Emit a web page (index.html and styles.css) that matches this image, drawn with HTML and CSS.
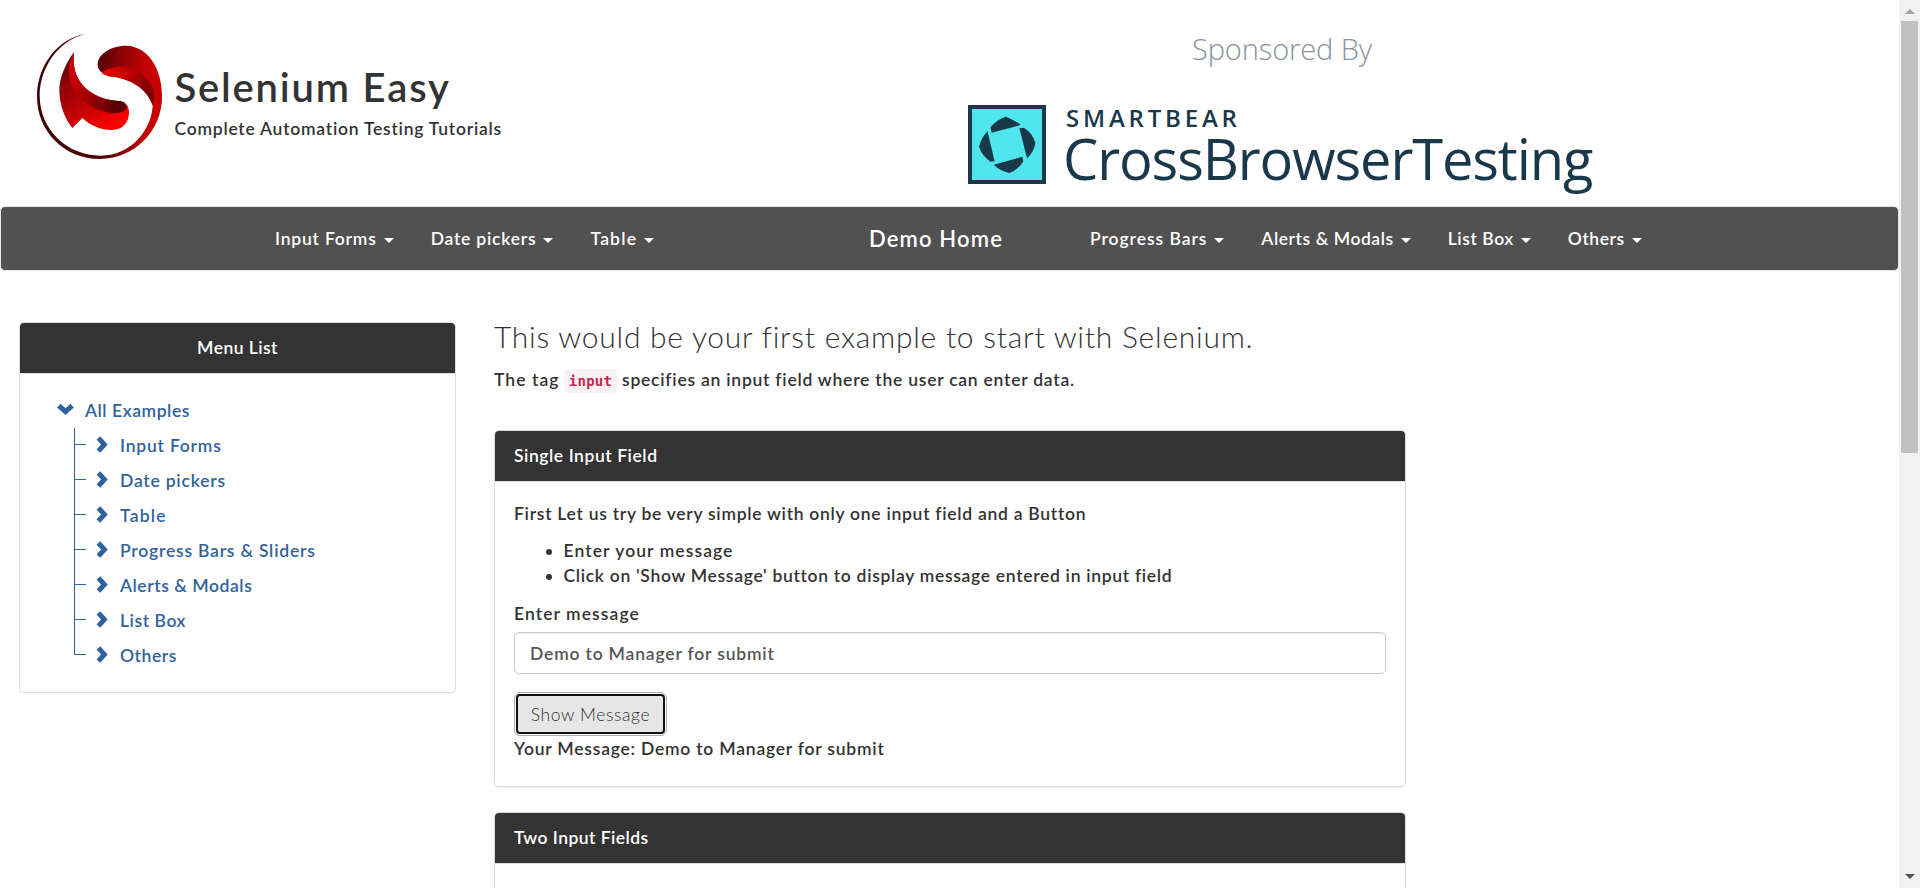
FILE: index.html
```
<!DOCTYPE html>
<html lang="en">
<head>
<meta charset="utf-8">
<title>Selenium Easy Demo</title>
<link rel="stylesheet" href="styles.css">
</head>
<body>
<div class="page">
  <header class="header">
    <svg class="logo" width="140" height="140" viewBox="0 0 420 420">
      <defs>
        <linearGradient id="ring" x1="0" y1="0" x2="1" y2="0"><stop offset="0" stop-color="#3c0408"/><stop offset=".55" stop-color="#550307"/><stop offset=".85" stop-color="#b80006"/><stop offset="1" stop-color="#cf0000"/></linearGradient>
        <linearGradient id="cap" x1="0" y1=".1" x2="1" y2=".4"><stop offset="0" stop-color="#4e0205"/><stop offset=".35" stop-color="#8e0306"/><stop offset=".75" stop-color="#c80204"/><stop offset="1" stop-color="#c60000"/></linearGradient>
        <linearGradient id="fold" x1="0" y1="0" x2="1" y2=".3"><stop offset="0" stop-color="#ee0000"/><stop offset=".45" stop-color="#c90000"/><stop offset="1" stop-color="#7c0003"/></linearGradient>
        <linearGradient id="tail" x1=".1" y1="0" x2=".7" y2="1"><stop offset="0" stop-color="#5a0306"/><stop offset=".55" stop-color="#b50307"/><stop offset="1" stop-color="#fb0000"/></linearGradient>
        <linearGradient id="sweep" x1="0" y1="0" x2="1" y2=".4"><stop offset="0" stop-color="#e00005"/><stop offset=".4" stop-color="#b00004"/><stop offset="1" stop-color="#5a0003"/></linearGradient>
      </defs>
      <path fill="url(#ring)" d="M165 27C85 40 21 120 21 215C21 320 105 402 209 402C312 402 396 320 396 214L369 232C368 312 306 392 212 392C112 392 30 315 29 213C29 125 88 46 165 27Z"/>
      <path fill="url(#cap)" d="M237 154C212 144 201 132 203 115C207 84 246 62 290 62C350 64 396 125 396 214C394 275 365 325 325 357C352 325 368 288 369 240C362 190 300 160 237 154Z"/>
      <path fill="url(#fold)" d="M215 145C230 125 285 119 318 136C354 154 376 194 372 222L368 242C350 190 300 160 237 154C228 151 221 149 215 145Z"/>
      <path fill="url(#tail)" d="M132 82C106 115 88 160 88 196C89 245 106 283 127 309L157 279C185 304 214 315 246 315C279 314 297 293 297 262C297 241 284 227 264 228C210 225 119 190 132 82Z"/>
      <path fill="url(#sweep)" d="M132 82C118 105 113 145 121 172C133 215 175 250 235 263C265 267 289 260 291 245C286 232 278 228 264 228C205 225 119 190 132 82Z"/>
    </svg>
    <div class="brand">
      <h1 class="brand-name">Selenium Easy</h1>
      <div class="brand-tag">Complete Automation Testing Tutorials</div>
    </div>
    <div class="sponsor">
      <div class="sponsor-by">Sponsored By</div>
      <div class="sponsor-row">
        <svg class="cbt" width="78" height="79" viewBox="0 0 78 79">
          <rect x="2" y="2" width="74" height="75" fill="#50e5ec" stroke="#19384a" stroke-width="4"/>
          <g fill="#19384a">
            <path d="M37.6 11.7Q46 14.5 52.7 20L23.7 27.7L22.4 22.3Q29 14.5 37.6 11.7Z"/>
            <path d="M51.4 23.3L55.7 22.7Q64.5 28 67.4 37.7Q66 47 59 53.3Z"/>
            <path d="M54.4 51.7L55.2 56.7Q49 65.5 41.3 68Q32 66 25.8 59.7Z"/>
            <path d="M19.5 26.3L26.6 56.3L22.4 56.7Q13.5 50 11 41.7Q13 33 19.5 26.3Z"/>
          </g>
        </svg>
        <div class="sponsor-names">
          <div class="smartbear">SMARTBEAR</div>
          <div class="crossbrowser">CrossBrowserTesting</div>
        </div>
      </div>
    </div>
  </header>

  <nav class="navbar">
    <div class="nav-group nav-left">
      <a class="nav-item">Input Forms<i class="caret"></i></a>
      <a class="nav-item">Date pickers<i class="caret"></i></a>
      <a class="nav-item wide">Table<i class="caret"></i></a>
    </div>
    <a class="nav-home">Demo Home</a>
    <div class="nav-group nav-right">
      <a class="nav-item progress">Progress Bars<i class="caret"></i></a>
      <a class="nav-item tight">Alerts &amp; Modals<i class="caret"></i></a>
      <a class="nav-item tight">List Box<i class="caret"></i></a>
      <a class="nav-item tight">Others<i class="caret"></i></a>
    </div>
  </nav>

  <main class="content">
    <aside class="panel menu">
      <div class="panel-head menu-head">Menu List</div>
      <div class="tree">
        <div class="tree-root"><svg width="18" height="12" viewBox="0 0 18 12"><path d="M1.8 2.6L8.5 8.6L15.2 2.6" fill="none" stroke="#30639b" stroke-width="5"/></svg><span class="tight">All Examples</span></div>
        <ul class="tree-list">
          <li><svg width="12" height="17" viewBox="0 0 12 17"><path d="M2.4 1.8L8.4 8.5L2.4 15.2" fill="none" stroke="#30639b" stroke-width="5"/></svg><span>Input Forms</span></li>
          <li><svg width="12" height="17" viewBox="0 0 12 17"><path d="M2.4 1.8L8.4 8.5L2.4 15.2" fill="none" stroke="#30639b" stroke-width="5"/></svg><span>Date pickers</span></li>
          <li><svg width="12" height="17" viewBox="0 0 12 17"><path d="M2.4 1.8L8.4 8.5L2.4 15.2" fill="none" stroke="#30639b" stroke-width="5"/></svg><span class="wide">Table</span></li>
          <li><svg width="12" height="17" viewBox="0 0 12 17"><path d="M2.4 1.8L8.4 8.5L2.4 15.2" fill="none" stroke="#30639b" stroke-width="5"/></svg><span>Progress Bars &amp; Sliders</span></li>
          <li><svg width="12" height="17" viewBox="0 0 12 17"><path d="M2.4 1.8L8.4 8.5L2.4 15.2" fill="none" stroke="#30639b" stroke-width="5"/></svg><span class="tight">Alerts &amp; Modals</span></li>
          <li><svg width="12" height="17" viewBox="0 0 12 17"><path d="M2.4 1.8L8.4 8.5L2.4 15.2" fill="none" stroke="#30639b" stroke-width="5"/></svg><span class="tight">List Box</span></li>
          <li><svg width="12" height="17" viewBox="0 0 12 17"><path d="M2.4 1.8L8.4 8.5L2.4 15.2" fill="none" stroke="#30639b" stroke-width="5"/></svg><span class="tight">Others</span></li>
        </ul>
      </div>
    </aside>

    <section class="main">
      <h2 class="lead">This would be your first example to start with Selenium.</h2>
      <p class="intro"><span class="intro-tag">The tag</span><code>input</code><span class="intro-text">specifies an input field where the user can enter data.</span></p>

      <div class="panel">
        <div class="panel-head tight">Single Input Field</div>
        <div class="panel-body">
          <p class="first">First Let us try be very simple with only one input field and a Button</p>
          <ul class="steps">
            <li class="loose">Enter your message</li>
            <li class="click">Click on 'Show Message' button to display message entered in input field</li>
          </ul>
          <label class="loose" for="msg">Enter message</label>
          <input class="field" id="msg" type="text" value="Demo to Manager for submit">
          <button class="btn" type="button">Show Message</button>
          <div class="result">Your Message: Demo to Manager for submit</div>
        </div>
      </div>

      <div class="panel">
        <div class="panel-head two">Two Input Fields</div>
        <div class="panel-body"></div>
      </div>
    </section>
  </main>
</div>
<div class="scrollbar">
  <i class="arrow up"></i>
  <div class="thumb"></div>
  <i class="arrow down"></i>
</div>
</body>
</html>
```
FILE: styles.css
```
* { box-sizing: border-box; }
html, body { height: 100%; }
body {
  margin: 0;
  display: flex;
  height: 888px;
  overflow: hidden;
  background: #fff;
  color: #333;
  font: 600 17.5px/25px Lato, "Open Sans", sans-serif;
  letter-spacing: .79px;
}
h1, h2, p, ul { margin: 0; padding: 0; font-weight: inherit; }
ul { list-style: none; }
.page { width: 1899px; flex: none; overflow: hidden; }

/* letter-spacing variants */
.wide { letter-spacing: 1.2px; }
.loose { letter-spacing: 1.08px; }
.tight { letter-spacing: .56px; }
.click { letter-spacing: .69px; }
.first { letter-spacing: .72px; }
.two, .menu-head { letter-spacing: .45px; }
.progress { letter-spacing: .95px; }

/* header */
.header { display: flex; height: 206px; padding-left: 30px; }
.logo { flex: none; margin-top: 25px; }
.brand { width: 798px; padding: 64px 0 0 4.5px; }
.brand-name { font-size: 40px; line-height: 46px; letter-spacing: 1.8px; }
.brand-tag { margin-top: 6px; letter-spacing: .76px; }
.sponsor { padding-top: 29px; font-family: "Open Sans", sans-serif; }
.sponsor-by { width: 628px; text-align: center; font-size: 29px; line-height: 40px; font-weight: 300; letter-spacing: -.1px; color: #8593a0; }
.sponsor-row { display: flex; margin-top: 36px; color: #19384a; }
.sponsor-names { padding: 1px 0 0 20px; }
.smartbear { font-size: 24px; line-height: 24px; font-weight: 600; letter-spacing: 3.8px; }
.crossbrowser { margin-left: -3px; font-size: 56px; line-height: 56px; font-weight: 400; letter-spacing: -1.1px; }

/* navigation */
.navbar {
  display: flex;
  align-items: center;
  height: 65px;
  border: 1px solid #e7e7e7;
  border-radius: 5px;
  background: #515151;
  color: #fff;
  padding-left: 274px;
}
.nav-group { display: flex; gap: 37px; }
.nav-left { width: 594px; }
.nav-item { display: flex; align-items: center; white-space: nowrap; }
.caret { margin: 3px 0 0 7px; border: 5px solid transparent; border-top-color: #fff; border-bottom: 0; }
.nav-home { width: 221px; font-size: 22px; letter-spacing: 1.15px; }

/* panels */
.content { display: flex; padding: 50px 0 0 19px; }
.panel { border: 1px solid #ddd; border-radius: 5px; box-shadow: 0 1px 1px rgba(0,0,0,.05); }
.panel-head {
  height: 51px;
  padding: 12px 19px 14px;
  border-bottom: 1px solid #ddd;
  border-radius: 4px 4px 0 0;
  background: #333;
  color: #fff;
}
.menu { width: 437px; height: 371px; margin-top: 1px; }
.menu-head { text-align: center; }

/* menu tree */
.tree { padding: 24px 0 0 37px; color: #30639b; }
.tree-root { display: flex; height: 30px; }
.tree-root svg { margin: 5px 10px 0 0; }
.tree-list { position: relative; margin-left: 17px; }
.tree-list::before { content: ""; position: absolute; left: 0; top: 0; width: 1px; height: 227px; background: #30639b; }
.tree-list li { display: flex; height: 35px; padding-top: 5px; }
.tree-list li::before { content: ""; width: 12px; height: 1px; margin: 11px 10px 0 0; background: #30639b; }
.tree-list svg { margin: 3px 12px 0 0; }

/* examples */
.main { width: 912px; margin-left: 38px; }
.lead { margin-top: -1px; font-size: 30px; line-height: 33px; font-weight: 300; letter-spacing: .75px; white-space: nowrap; }
.intro { display: flex; margin: 14px 0 37px; }
.intro-tag { width: 70px; letter-spacing: 1.05px; }
.intro-text { letter-spacing: .76px; }
code {
  width: 53px;
  height: 24px;
  margin: 2px 5px 0 0;
  border-radius: 5px;
  background: #f9f2f4;
  color: #c7254e;
  font: 700 14px/24px "DejaVu Sans Mono", monospace;
  letter-spacing: .3px;
  text-align: center;
}
.main .panel { margin-bottom: 25px; }
.panel-body { height: 304px; padding: 19px 19px; }
.steps { margin: 12px 0 13px 49.5px; list-style: disc; }
.steps li { white-space: nowrap; }
label { display: block; }
.field {
  display: block;
  width: 100%;
  height: 42px;
  margin: 6px 0 20px;
  padding: 0 15px;
  border: 1px solid #ccc;
  border-radius: 5px;
  box-shadow: inset 0 1px 1px rgba(0,0,0,.075);
  color: #555;
  font: inherit;
  letter-spacing: .82px;
}
.btn {
  display: block;
  width: 149px;
  height: 40px;
  margin: 0 0 2px 2px;
  padding: 0;
  border: 2px solid #101010;
  border-radius: 4px;
  outline: 1px solid #adadad;
  outline-offset: 1px;
  background: #e6e6e6;
  color: #333;
  font: 300 17.5px/25px Lato, sans-serif;
  letter-spacing: .6px;
}
.result { letter-spacing: .78px; }

/* scrollbar */
.scrollbar { display: flex; flex-direction: column; align-items: center; width: 21px; height: 888px; background: #f1f1f1; }
.thumb { width: 17px; height: 432px; background: #c1c1c1; }
.arrow { border: 5px solid transparent; }
.up { margin: 9px 0 7px; border-top: 0; border-bottom-color: #a3a3a3; }
.down { margin: auto 0 9px; border-bottom: 0; border-top-color: #505050; }
```
